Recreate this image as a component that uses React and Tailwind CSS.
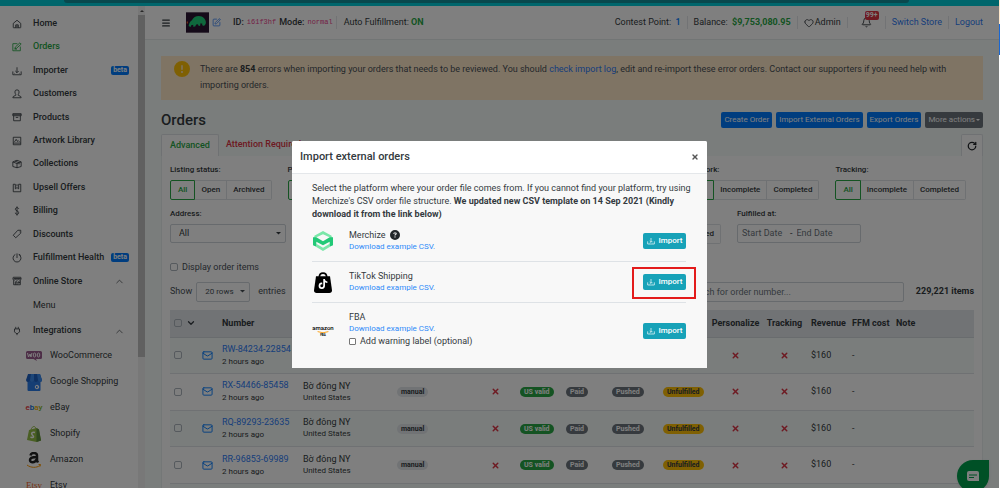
import { useState } from 'react';
import { RotateCw, Heart, Bell, Menu, SquarePen, X, Mail, ChevronUp, ChevronDown } from 'lucide-react';
import { FaCircleQuestion, FaCircleExclamation, FaTiktok } from 'react-icons/fa6';

const ICON_PATHS = {
  home: <path d="M3 10.5 12 3l9 7.5V20a1 1 0 0 1-1 1H4a1 1 0 0 1-1-1zM9 21v-7h6v7M9 17h6" />,
  orders: <path d="M20 11v10H2V4h11M7 16l1-4L19 2l3 3L11 15zM6 17h6" />,
  importer: <path d="M2 13v8h20v-8M12 3v13M8 12l4 4 4-4M6 18h1M17 18h1" />,
  customers: <path d="M12 2a5 5 0 0 0-5 5c0 3 1 4 2 6v2l-6 3-1 3h20l-1-3-6-3v-2c1-2 2-3 2-6a5 5 0 0 0-5-5z" />,
  products: <path d="M2 4h20v5H2zM4 9v12h16V9M9 13h6M2 6.5h20" />,
  artwork: <path d="M3 3h18v18H3zM3 17h18M6 14l4-6 3 5 2-2 3 3" />,
  collections: <path d="M2 7l10-4 10 4v11l-10 3-10-3zM2 7l10 4 10-4M12 11v10M7 5l10 4v4" />,
  upsell: <path d="M3 3v18h18V3M3 3h5v11l4-3 4 3V3h5M12 3v5" />,
  billing: <path d="M16 7c0-2-2-3-4-3s-4 1-4 4c0 4 8 3 8 8 0 3-2 4-4 4s-4-1-4-4M12 1v22" />,
  discounts: <path d="M3 15 14 3l7 0v7L9 21zM17 7h1" />,
  health: <path d="M8 3.500a9.500 9.500 0 1 0 8 0M12 1v11M17 3l4 3" />,
  store: <path d="M3 3h18l1 5-3 2-3-2-4 2-4-2-3 2-3-2zM4 10v11h16V10M8 21v-7h4v7M15 14h3v3h-3zM4 6h17" />,
  integrations: <path d="M6 7h12v7l-4 4h-4l-4-4zM9 7V2M15 7V2M12 18v4" />,
};

const MAIN_LINKS = [
  { label: 'Home', icon: 'home' },
  { label: 'Orders', icon: 'orders', active: true },
  { label: 'Importer', icon: 'importer', beta: true },
  { label: 'Customers', icon: 'customers' },
  { label: 'Products', icon: 'products' },
  { label: 'Artwork Library', icon: 'artwork' },
  { label: 'Collections', icon: 'collections' },
  { label: 'Upsell Offers', icon: 'upsell' },
  { label: 'Billing', icon: 'billing' },
  { label: 'Discounts', icon: 'discounts' },
  { label: 'Fulfillment Health', icon: 'health', beta: true },
  { label: 'Online Store', icon: 'store', open: true },
];

const CHANNELS = [
  { label: 'WooCommerce', logo: <WooLogo /> },
  { label: 'Google Shopping', logo: <GoogleShoppingLogo /> },
  { label: 'eBay', logo: <EbayLogo /> },
  { label: 'Shopify', logo: <ShopifyLogo /> },
  { label: 'Amazon', logo: <AmazonLogo /> },
  { label: 'Etsy', logo: <span className="font-['Liberation_Serif',serif] text-[9px] text-[#f1641e]">Etsy</span> },
];

const ORDERS = ['RW-84234-22854', 'RX-54466-85458', 'RQ-89293-23635', 'RR-96853-69989'];

const COLUMNS = [
  'w-[29px]', 'w-[19px]', 'w-[81px]', 'w-[94px]', 'w-[82px]', 'w-[41px]', 'w-[46px]', 'w-[46px]',
  'w-[51px]', 'w-[50px]', 'w-[53px]', 'w-[45px]', 'w-[41px]', 'w-[44px]', '',
];

function LineIcon({ name, className = 'size-[10px]' }) {
  return (
    <svg viewBox="0 0 24 24" fill="none" stroke="currentColor" strokeWidth="2" className={className} aria-hidden="true">
      {ICON_PATHS[name]}
    </svg>
  );
}

function WooLogo() {
  return (
    <svg viewBox="0 0 32 20" className="w-4" aria-hidden="true">
      <path d="M3 0h26a3 3 0 0 1 3 3v10a3 3 0 0 1-3 3h-9l2 4-7-4H3a3 3 0 0 1-3-3V3a3 3 0 0 1 3-3z" fill="#9b5c8f" />
      <path d="M3 4l2 8 3-6 2 6c0-3 1-6 2-8" fill="none" stroke="#fff" strokeWidth="2" />
      <ellipse cx="17" cy="8" rx="2.500" ry="4" fill="none" stroke="#fff" strokeWidth="2" />
      <ellipse cx="25" cy="8" rx="2.500" ry="4" fill="none" stroke="#fff" strokeWidth="2" />
    </svg>
  );
}

function GoogleShoppingLogo() {
  return (
    <svg viewBox="0 0 32 34" className="w-4" aria-hidden="true">
      <path d="M3 12h26v20a2 2 0 0 1-2 2H5a2 2 0 0 1-2-2z" fill="#2b7de9" />
      <path d="M4 0h24l4 12a4 4 0 0 1-8 0 4 4 0 0 1-8 0 4 4 0 0 1-8 0 4 4 0 0 1-8 0z" fill="#1f62c4" />
      <path d="M10 0h6v12a4 4 0 0 1-8 0zM22 0h6l4 12a4 4 0 0 1-8 0z" fill="#3b8cf0" />
      <circle cx="22" cy="26" r="3.500" fill="none" stroke="#fff" strokeWidth="2" />
      <path d="M22 26h4" stroke="#fff" strokeWidth="2" />
    </svg>
  );
}

function EbayLogo() {
  return (
    <span className="text-[8px] font-medium" aria-hidden="true">
      <span className="text-[#e53238]">e</span>
      <span className="text-[#0064d2]">b</span>
      <span className="text-[#f5af02]">a</span>
      <span className="text-[#86b817]">y</span>
    </span>
  );
}

function ShopifyLogo() {
  return (
    <svg viewBox="0 0 28 32" className="h-4" aria-hidden="true">
      <path d="M4 8l15-4 5 3 4 22-9 3L0 28z" fill="#95bf47" />
      <path d="M19 4l5 3 4 22-9 3z" fill="#5e8e3e" />
      <path d="M8 8c1-5 4-7 6-7s4 3 4 5" fill="none" stroke="#95bf47" strokeWidth="2" />
      <path d="M16 13c-5-2-8 1-6 4 1 2 4 3 3 5-1 2-4 1-6 0" fill="none" stroke="#fff" strokeWidth="3" />
    </svg>
  );
}

function AmazonLogo() {
  return (
    <svg viewBox="0 0 32 32" className="size-4" aria-hidden="true">
      <path d="M9 7c1-7 13-6 13 0v9c0 3 1 3 2 5M21 10c-8 0-13 1-13 6 0 6 10 6 13-1" fill="none" stroke="#222" strokeWidth="5" />
      <path d="M2 26c8 6 19 6 26 1M25 25h4l-1 4" fill="none" stroke="#f90" strokeWidth="2" />
    </svg>
  );
}

function StoreLogo() {
  return (
    <svg viewBox="0 0 70 62" className="h-[21px] w-[23px]" aria-hidden="true">
      <path d="M0 0h70v62H0z" fill="#2b1433" />
      <path d="M8 42c2-10 4-14 10-18 6-15 28-17 37-6 7 8 7 17 2 21-5 4-10 0-7-4l-6-2-1 8-4 1-3-6-5 1-3 6-6 1v-6l-6 1-2 6z" fill="#1fd07a" />
      <path d="M2 28h4v6H2z" fill="#e0562b" />
    </svg>
  );
}

function MerchizeLogo() {
  return (
    <svg viewBox="0 0 60 60" className="size-5" aria-hidden="true">
      <path d="M30 0 56 14v8L30 10 4 22v-8z" fill="#7be7a9" />
      <path d="M10 38 30 50l20-12v10L30 60 10 48z" fill="#7be7a9" />
      <path d="M0 19h10l20 12 20-12h10v24l-10 4V32L30 43 10 32v15L0 43z" fill="#22c977" />
    </svg>
  );
}

function TikTokShopLogo() {
  return (
    <span className="relative flex h-[21px] w-[18px] items-center justify-center">
      <svg viewBox="0 0 54 63" className="absolute inset-0" aria-hidden="true">
        <path d="M16 16c0-17 22-17 22 0" fill="none" stroke="#000" strokeWidth="5" />
        <path d="M6 13h42l6 42q0 8-8 8H8q-8 0-8-8z" fill="#000" />
      </svg>
      <FaTiktok className="relative mt-1 size-[10px] text-white" />
    </span>
  );
}

function AmazonFbaLogo() {
  return (
    <span className="flex w-5 flex-col items-center text-black">
      <span className="text-[6px] leading-[6px] font-medium">amazon</span>
      <svg viewBox="0 0 20 4" className="w-3" aria-hidden="true">
        <path d="M1 1q9 4 18 0" fill="none" stroke="#f90" strokeWidth="1.500" />
      </svg>
      <span className="text-[3px] leading-[3px] font-bold">FBA</span>
    </span>
  );
}

function Beta() {
  return <span className="ml-auto rounded-[2px] bg-[#007bff] px-[2px] text-[7px] leading-[9px] font-bold text-white">beta</span>;
}

function Sidebar() {
  return (
    <aside className="flex w-[145px] shrink-0 bg-white">
      <nav className="min-w-0 flex-1 overflow-hidden pt-[6px] text-[9px] font-medium text-[#343a40]">
        <ul className="grid h-[281px] auto-rows-fr">
          {MAIN_LINKS.map(link => (
            <li key={link.label} className={link.active ? 'text-[#28a745]' : ''}>
              <a href="#" className="flex h-full items-center pr-[9px] pl-3">
                <LineIcon name={link.icon} />
                <span className="ml-[11px] whitespace-nowrap">{link.label}</span>
                {link.beta && <Beta />}
                {link.open && <ChevronUp className="mr-1 ml-auto size-[11px]" strokeWidth={1.5} />}
              </a>
            </li>
          ))}
        </ul>
        <a href="#" className="flex h-[26px] items-center pl-[33px] font-normal">Menu</a>
        <a href="#" className="flex h-6 items-center pr-[9px] pl-3">
          <LineIcon name="integrations" />
          <span className="ml-[11px]">Integrations</span>
          <ChevronUp className="mr-1 ml-auto size-[11px]" strokeWidth={1.5} />
        </a>
        <ul className="font-normal">
          {CHANNELS.map(({ label, logo }) => (
            <li key={label}>
              <a href="#" className="flex h-[26px] items-center pl-[26px]">
                <span className="flex w-4 justify-center">{logo}</span>
                <span className="ml-2">{label}</span>
              </a>
            </li>
          ))}
        </ul>
      </nav>
      <div className="flex w-[7px] flex-col items-center bg-[#f1f1f1]" aria-hidden="true">
        <svg viewBox="0 0 7 9" className="h-[9px] w-[7px] shrink-0"><path d="M2 6h4L4 4z" fill="#505050" /></svg>
        <div className="h-[342px] w-full shrink-0 bg-[#c1c1c1]" />
      </div>
    </aside>
  );
}

function Header() {
  const divider = 'border-l border-[#e4e7ea]';
  return (
    <header className="flex h-[34px] shrink-0 items-center border-b border-[#e4eaea] bg-white px-4 text-[9px] whitespace-nowrap text-[#343a40]">
      <button type="button" aria-label="Toggle menu" className="mr-[15px]"><Menu className="size-[10px]" strokeWidth={3} /></button>
      <StoreLogo />
      <a href="#" aria-label="Edit store" className="mr-3 ml-[3px] text-[#2f7df6]"><SquarePen className="size-[9px]" /></a>
      <span className="font-medium">ID:</span>
      <code className="mx-[3px] font-['Liberation_Mono',monospace] text-[7px] text-[#e83e8c]">i61f3hf</code>
      <span className="font-medium">Mode:</span>
      <code className="mx-[3px] font-['Liberation_Mono',monospace] text-[7px] text-[#e83e8c]">normal</code>
      <span className={`${divider} pl-[7px]`}>Auto Fulfillment: <b className="font-bold text-[#28a745]">ON</b></span>
      <span className="ml-auto pr-[6px]">Contest Point: <b className="ml-[2px] font-medium text-[#007bff]">1</b></span>
      <span className={`${divider} px-[6px]`}>Balance: <b className="ml-[2px] font-bold text-[#28a745]">$9,753,080.95</b></span>
      <span className={`${divider} flex items-center gap-px px-[6px]`}><Heart className="size-[10px]" />Admin</span>
      <span className={`${divider} flex px-[13px]`}>
        <button type="button" aria-label="Notifications" className="relative">
          <Bell className="size-[11px]" />
          <span className="absolute -top-[6px] left-1 rounded-[2px] bg-[#dc3545] px-px text-[7px] leading-[9px] font-bold text-white">99+</span>
        </button>
      </span>
      <a href="#" className={`${divider} px-[6px] text-[#2f7df6]`}>Switch Store</a>
      <a href="#" className={`${divider} pl-[6px] text-[#2f7df6]`}>Logout</a>
    </header>
  );
}

function FilterGroup({ label, options }) {
  return (
    <fieldset className="shrink-0">
      <legend className="mb-1 leading-3">{label}</legend>
      <div className="flex h-5">
        {options.map((option, i) => (
          <button
            key={option}
            type="button"
            className={i === 0
              ? 'rounded-l-[2px] border border-[#28a745] px-[7px] font-medium text-[#28a745]'
              : 'border border-l-0 border-[#dee2e6] px-[6px] font-medium last:rounded-r-[2px]'}
          >
            {option}
          </button>
        ))}
      </div>
    </fieldset>
  );
}

function Filters() {
  return (
    <div className="text-[8px] font-medium text-[#343a40]">
      <div className="flex justify-between pr-2">
        <div className="flex gap-4">
          <FilterGroup label="Listing status:" options={['All', 'Open', 'Archived']} />
          <FilterGroup label="Payment:" options={['All']} />
        </div>
        <div className="flex gap-4">
          <FilterGroup label="Artwork:" options={['All', 'Incomplete', 'Completed']} />
          <FilterGroup label="Tracking:" options={['All', 'Incomplete', 'Completed']} />
        </div>
      </div>
      <div className="mt-2 flex justify-between">
        <div className="w-[116px]">
          <label htmlFor="address" className="mb-1 block leading-3">Address:</label>
          <div className="relative">
            <select id="address" className="h-[19px] w-full appearance-none rounded-[2px] border border-[#ced4da] pl-2 text-[9px] font-normal">
              <option>All</option>
            </select>
            <Caret className="absolute top-2 right-[5px]" />
          </div>
        </div>
        <div className="flex gap-4 pr-[113px]">
          <FilterGroup label="Status:" options={['All', 'Fulfilled']} />
          <div>
            <label htmlFor="start-date" className="mb-1 block leading-3">Fulfilled at:</label>
            <div className="flex h-[19px] w-[124px] items-center rounded-[2px] border border-[#ced4da] px-1 text-[9px] font-normal">
              <input id="start-date" placeholder="Start Date" className="w-12 placeholder:text-[#6c757d]" />
              <span>-</span>
              <input aria-label="End Date" placeholder="End Date" className="ml-1 w-12 placeholder:text-[#6c757d]" />
            </div>
          </div>
        </div>
      </div>
    </div>
  );
}

function Caret({ className = '' }) {
  return (
    <svg viewBox="0 0 6 3" className={`w-[5px] ${className}`} aria-hidden="true">
      <path d="M0 0h6L3 3z" fill="currentColor" />
    </svg>
  );
}

function Cross() {
  return <X className="mx-auto size-[9px] text-[#dc3545]" strokeWidth={4} aria-label="No" />;
}

const pill = 'inline-block rounded-full px-1 text-[7px] leading-[10px] font-bold';

function OrdersTable() {
  return (
    <table className="mt-2 h-[210px] w-full table-fixed text-left text-[9px] whitespace-nowrap text-[#343a40]">
      <colgroup>
        {COLUMNS.map((width, i) => <col key={i} className={width} />)}
      </colgroup>
      <thead className="bg-[#e2e6ea]">
        <tr className="h-[27px] border-b border-[#d3d9dd]">
          <th colSpan={2} className="pl-1">
            <div className="flex items-center gap-1">
              <input type="checkbox" aria-label="Select all orders" className="size-2 appearance-none rounded-[2px] border border-[#adb5bd]" />
              <ChevronDown className="size-[10px]" strokeWidth={3} />
            </div>
          </th>
          <th className="px-1">Number</th>
          <td colSpan={7} />
          <th className="text-center">Personalize</th>
          <th className="text-center">Tracking</th>
          <th className="px-1">Revenue</th>
          <th className="px-1">FFM cost</th>
          <th className="px-1">Note</th>
        </tr>
      </thead>
      <tbody>
        {ORDERS.map(number => (
          <tr key={number} className="h-[36px] border-b border-[#dee2e6] odd:bg-[#f5faf9]">
            <td className="pl-1">
              <input type="checkbox" aria-label={`Select ${number}`} className="block size-2 appearance-none rounded-[2px] border border-[#adb5bd]" />
            </td>
            <td className="px-[3px]"><Mail className="size-[11px] text-[#007bff]" strokeWidth={2} /></td>
            <td className="px-1 leading-3">
              <a href="#" className="block text-[#2f7df6]">{number}</a>
              <span className="text-[8px]">2 hours ago</span>
            </td>
            <td className="px-1 leading-3">
              Bờ đông NY
              <span className="block text-[8px]">United States</span>
            </td>
            <td className="px-1"><span className={`${pill} bg-[#e2e6ea]`}>manual</span></td>
            <td><Cross /></td>
            <td className="px-1"><span className={`${pill} bg-[#28a745] text-white`}>US valid</span></td>
            <td className="px-1"><span className={`${pill} bg-[#6c757d] text-white`}>Paid</span></td>
            <td className="px-1"><span className={`${pill} bg-[#6c757d] text-white`}>Pushed</span></td>
            <td className="px-1"><span className={`${pill} bg-[#ffc107]`}>Unfulfilled</span></td>
            <td><Cross /></td>
            <td><Cross /></td>
            <td className="px-1">$160</td>
            <td className="px-1">-</td>
            <td />
          </tr>
        ))}
        <tr className="h-[36px] bg-[#f5faf9]"><td colSpan={15} /></tr>
      </tbody>
    </table>
  );
}

function ImportRow({ logo, name, help, children }) {
  return (
    <li className="flex items-center border-b border-[#dee2e6] py-2 last:border-b-0">
      <div className="flex w-[22px] justify-center">{logo}</div>
      <div className="ml-[15px] leading-3">
        <div className="flex items-center gap-1 text-[9px]">
          {name}
          {help && <FaCircleQuestion className="size-[10px] text-[#212529]" />}
        </div>
        <a href="#" className="block text-[8px] text-[#2f8bf8]">Download example CSV.</a>
        {children}
      </div>
      <button type="button" className="ml-auto flex h-4 w-[43px] items-center justify-center gap-1 rounded-[2px] bg-[#17a2b8] text-[8px] font-medium text-white">
        <LineIcon name="importer" className="size-2" />
        Import
      </button>
    </li>
  );
}

function ImportModal() {
  const [warningLabel, setWarningLabel] = useState(false);
  return (
    <div className="fixed inset-y-0 right-px left-0 flex items-start justify-center bg-black/50 pt-[141px]">
      <div role="dialog" aria-modal="true" aria-labelledby="import-title" className="relative w-[415px] overflow-hidden rounded-t-[2px] bg-[#f8f8f8] pb-[9px] text-[#343a40]">
        <div className="flex h-[33px] items-center justify-between border-b border-[#e4e7ea] bg-white px-2">
          <h2 id="import-title" className="text-[11px] font-medium">Import external orders</h2>
          <button type="button" aria-label="Close"><X className="size-2 text-[#555]" strokeWidth={4} /></button>
        </div>
        <div className="pt-2 pr-[21px] pl-5">
          <p className="-mr-3 text-[9px] leading-[13px]">
            Select the platform where your order file comes from. If you cannot find your platform, try using Merchize's CSV order file structure.{' '}
            <b className="font-bold">We updated new CSV template on 14 Sep 2021 (Kindly download it from the link below)</b>
          </p>
          <ul>
            <ImportRow logo={<MerchizeLogo />} name="Merchize" help />
            <ImportRow logo={<TikTokShopLogo />} name="TikTok Shipping" />
            <ImportRow logo={<AmazonFbaLogo />} name="FBA">
              <label className="flex items-center gap-1 pb-1 text-[9px]">
                <input
                  type="checkbox"
                  checked={warningLabel}
                  onChange={e => setWarningLabel(e.target.checked)}
                  className="size-[7px] appearance-none rounded-[1px] border border-[#767676] bg-white checked:bg-[#007bff]"
                />
                Add warning label (optional)
              </label>
            </ImportRow>
          </ul>
        </div>
        <div className="pointer-events-none absolute top-[126px] right-[11px] h-8 w-16 border-2 border-[#e31b1b]" />
      </div>
    </div>
  );
}

export default function App() {
  return (
    <div className="flex h-screen overflow-hidden bg-white font-[Roboto,sans-serif]">
      <div className="flex min-w-0 flex-1 flex-col">
        <div className="h-[6px] shrink-0 bg-[#00ccd8] pr-[90px] pl-16">
          <div className="h-[3px] rounded-b-[3px] bg-[#12909a]" />
        </div>
        <div className="flex min-h-0 flex-1">
          <Sidebar />
          <div className="flex min-w-0 flex-1 flex-col bg-[#f4faf9]">
            <Header />
            <main className="min-h-0 flex-1 overflow-hidden px-4 pt-4">
              <div className="flex gap-[10px] bg-[#ffe8c8] pt-[5px] pr-2 pb-[7px] pl-[13px] text-[9px] leading-4 text-[#495057]">
                <FaCircleExclamation className="size-4 shrink-0 text-[#ffc107]" />
                <p>
                  There are <b className="font-bold text-[#343a40]">854</b> errors when importing your orders that needs to be reviewed. You should{' '}
                  <a href="#" className="text-[#2f7df6]">check import log</a>, edit and re-import these error orders. Contact our supporters if you need help with importing orders.
                </p>
              </div>
              <div className="mt-[10px] flex items-center gap-1">
                <h1 className="mr-auto text-[15px] leading-5 font-medium text-[#343a40]">Orders</h1>
                {['Create Order', 'Import External Orders', 'Export Orders'].map(label => (
                  <button key={label} type="button" className="h-4 rounded-[2px] bg-[#007bff] px-[3px] text-[8px] text-white">{label}</button>
                ))}
                <button type="button" className="flex h-4 items-center gap-px rounded-[2px] bg-[#6c757d] px-[3px] text-[8px] text-white">
                  More actions <svg viewBox="0 0 6 3" className="w-1" aria-hidden="true"><path d="M0 0h6L3 3z" fill="currentColor" /></svg>
                </button>
              </div>
              <div className="mt-1 flex h-[22px] justify-between text-[9px] font-medium">
                <div className="flex">
                  <button type="button" className="rounded-t-[2px] border border-b-0 border-[#dee2e6] bg-white px-2 text-[#28a745]">Advanced</button>
                  <button type="button" className="px-[7px] text-[#dc3545]">Attention Required</button>
                </div>
                <button type="button" aria-label="Refresh" className="rounded-t-[2px] border border-b-0 border-[#dee2e6] bg-white px-[5px]">
                  <RotateCw className="size-[10px] text-[#212529]" strokeWidth={3} />
                </button>
              </div>
              <section className="border border-t-0 border-[#e9eeee] bg-white px-2 pt-2">
                <Filters />
                <label className="mt-[17px] flex items-center gap-1 text-[9px] leading-3 text-[#495057]">
                  <input type="checkbox" className="size-2 appearance-none rounded-[2px] border border-[#adb5bd]" />
                  Display order items
                </label>
                <div className="mt-[9px] flex h-5 items-center text-[9px] text-[#495057]">
                  <label htmlFor="page-size">Show</label>
                  <div className="relative mx-1">
                    <select id="page-size" className="h-5 w-[54px] appearance-none rounded-[2px] border border-[#ced4da] pl-2 text-[8px]">
                      <option>20 rows</option>
                    </select>
                    <Caret className="absolute top-2 right-[5px]" />
                  </div>
                  <span className="ml-1">entries</span>
                  <input aria-label="Search orders" placeholder="Search for order number..." className="ml-auto h-5 w-[222px] rounded-[2px] border border-[#ced4da] px-1 placeholder:text-[#6c757d]" />
                  <b className="ml-3 font-bold text-[#343a40]">229,221 items</b>
                </div>
                <OrdersTable />
              </section>
            </main>
          </div>
        </div>
      </div>
      <div className="flex w-px shrink-0 flex-col" aria-hidden="true">
        <div className="h-6 bg-[#ffe8cc]" />
        <div className="h-[31px] bg-[#1967d2]" />
      </div>
      <button type="button" aria-label="Open chat" className="fixed right-[11px] -bottom-1 flex size-8 items-center justify-center rounded-full rounded-tr-[6px] bg-[#00a04c] shadow">
        <svg viewBox="0 0 12 10" className="w-3" aria-hidden="true">
          <path d="M2 0h8q2 0 2 2v8H2Q0 10 0 8V2q0-2 2-2z" fill="#fff" />
          <path d="M2 4h8M2 6.500h5" stroke="#00a04c" />
        </svg>
      </button>
      <ImportModal />
    </div>
  );
}
